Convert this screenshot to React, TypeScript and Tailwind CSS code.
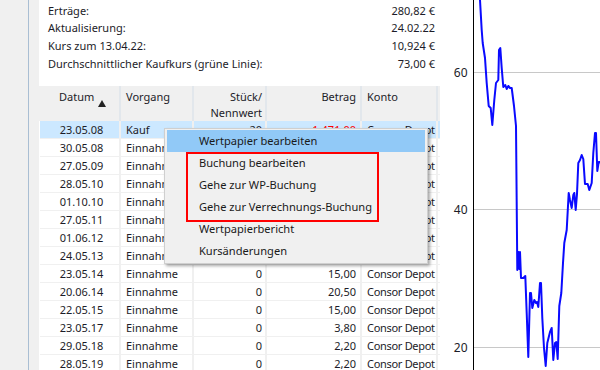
import React from "react";

type Row = { d: string; v: string; s: string; b: string; k: string; red?: boolean };

const rows: Row[] = [
  { d: "23.05.08", v: "Kauf", s: "20", b: "-1.471,00", k: "Consor Depot", red: true },
  { d: "30.05.08", v: "Einnahme", s: "0", b: "9,00", k: "Consor Depot" },
  { d: "27.05.09", v: "Einnahme", s: "0", b: "10,00", k: "Consor Depot" },
  { d: "28.05.10", v: "Einnahme", s: "0", b: "11,00", k: "Consor Depot" },
  { d: "01.10.10", v: "Einnahme", s: "0", b: "4,00", k: "Consor Depot" },
  { d: "27.05.11", v: "Einnahme", s: "0", b: "12,00", k: "Consor Depot" },
  { d: "01.06.12", v: "Einnahme", s: "0", b: "13,00", k: "Consor Depot" },
  { d: "24.05.13", v: "Einnahme", s: "0", b: "14,00", k: "Consor Depot" },
  { d: "23.05.14", v: "Einnahme", s: "0", b: "15,00", k: "Consor Depot" },
  { d: "20.06.14", v: "Einnahme", s: "0", b: "20,50", k: "Consor Depot" },
  { d: "22.05.15", v: "Einnahme", s: "0", b: "15,00", k: "Consor Depot" },
  { d: "23.05.17", v: "Einnahme", s: "0", b: "3,80", k: "Consor Depot" },
  { d: "29.05.18", v: "Einnahme", s: "0", b: "2,20", k: "Consor Depot" },
  { d: "28.05.19", v: "Einnahme", s: "0", b: "2,20", k: "Consor Depot" },
];

const info = [
  ["Erträge:", "280,82 €"],
  ["Aktualisierung:", "24.02.22"],
  ["Kurs zum 13.04.22:", "10,924 €"],
  ["Durchschnittlicher Kaufkurs (grüne Linie):", "73,00 €"],
];

const pts =
  "39.5,-10 40,0 41.7,30 42.7,43 45,58 46.7,83 48.7,106 50.7,108 52.3,125 54.3,100 56,83 58.3,80 59,50 60.3,48 61.7,68 63.3,87 65.3,85 66.7,89 68.3,86 70,88 71.7,88 74,106 76,126 77.3,270 78.3,252 79.3,269 80,252 81,278 83.3,278 85.3,276 86.7,313 88.3,357 90,293 91,293 92.3,308 94.3,300 96,303 97,302 98.3,307 100,283 101,283 102.3,318 104,348 105.7,366 107.3,343 110,332 111.7,328 113.3,360 115,343 116.3,342 117.7,359 119.3,306 121.3,293 123,263 124.3,243 126.7,230 128.7,193 130,200 131.7,208 133.3,195 134.3,193 135.7,210 137,194 138.3,163 140,160 141.7,155 143.3,159 145,184 147.7,184 149.3,190 151.7,183 153.3,153 155,133 156,133 157.3,171 158.7,162 160,162 162,165";

const menuItems = [
  "Wertpapier bearbeiten",
  "Buchung bearbeiten",
  "Gehe zur WP-Buchung",
  "Gehe zur Verrechnungs-Buchung",
  "Wertpapierbericht",
  "Kursänderungen",
];

export default function App() {
  return (
    <div className="relative flex w-[600px] h-[370px] overflow-hidden bg-[#f0f0f0] text-[11px] text-[#1c1c28] font-['Noto_Sans',sans-serif]">
      <div className="w-[28px] shrink-0" />
      <div className="w-px shrink-0 bg-[#a9bed3]" />
      <div className="w-[10px] shrink-0" />
      <div className="flex h-[370px] w-[401px] shrink-0 flex-col overflow-hidden">
        <div className="h-[86px] shrink-0 bg-white pl-[9px] pr-[5px] pt-[2px]">
          {info.map(([l, r]) => (
            <div key={l} className="flex h-[17.67px] items-center justify-between">
              <span>{l}</span>
              <span>{r}</span>
            </div>
          ))}
        </div>
        <div className="flex-1 bg-white">
          <div className="flex h-[35px] bg-[#f0f0f0] pl-px leading-[16px]">
            <div className="flex w-[81px] items-start border-r-2 border-[#e2e7ec] pl-[19px] pt-[3px]">
              <span>Datum</span>
              <svg width="8" height="7" viewBox="0 0 8 7" className="ml-[4px] mt-[11px]">
                <path d="M4 0 L8 7 L0 7 Z" fill="#222" />
              </svg>
            </div>
            <div className="w-[73px] border-r-2 border-[#e2e7ec] pl-[5px] pt-[3px]">Vorgang</div>
            <div className="w-[73px] border-r-2 border-[#e2e7ec] pr-[3px] pt-[3px] text-right">
              Stück/
              <br />
              Nennwert
            </div>
            <div className="w-[95px] border-r-2 border-[#e2e7ec] pr-[4px] pt-[3px] text-right">Betrag</div>
            <div className="w-[76px] border-r-2 border-[#e2e7ec] pl-[5px] pt-[3px]">Konto</div>
          </div>
          <div className="pl-px">
            {rows.map((r, i) => (
              <div
                key={r.d}
                className={`flex h-[18px] border-b border-[#f0f0f0] leading-[17px] ${i === 0 ? "bg-[#cce8ff]" : ""}`}
              >
                <div className="w-[81px] border-r-2 border-[#f0f0f0] pl-[4px] text-center">{r.d}</div>
                <div className="w-[73px] overflow-hidden whitespace-nowrap border-r-2 border-[#f0f0f0] pl-[5px]">{r.v}</div>
                <div className="w-[73px] border-r-2 border-[#f0f0f0] pr-[3px] text-right">{r.s}</div>
                <div className={`w-[95px] border-r-2 border-[#f0f0f0] pr-[4px] text-right ${r.red ? "text-[#ff0000]" : ""}`}>{r.b}</div>
                <div className="w-[76px] whitespace-nowrap border-r-2 border-[#f0f0f0] pl-[5px] tracking-[-0.3px]">{r.k}</div>
              </div>
            ))}
          </div>
        </div>
      </div>
      <div className="relative flex-1 bg-white">
        <svg width="160" height="370" viewBox="0 0 160 370" className="block">
          <line x1="34" y1="72.5" x2="160" y2="72.5" stroke="#c8c8c8" strokeWidth="1" />
          <line x1="34" y1="209.5" x2="160" y2="209.5" stroke="#c8c8c8" strokeWidth="1" />
          <line x1="34" y1="347.5" x2="160" y2="347.5" stroke="#c8c8c8" strokeWidth="1" />
          <line x1="33.5" y1="0" x2="33.5" y2="370" stroke="#000" strokeWidth="1" />
          <text x="27.5" y="77" textAnchor="end" fontSize="12" fill="#1c1c28" fontFamily="Noto Sans, sans-serif">60</text>
          <text x="27.5" y="214" textAnchor="end" fontSize="12" fill="#1c1c28" fontFamily="Noto Sans, sans-serif">40</text>
          <text x="27.5" y="352" textAnchor="end" fontSize="12" fill="#1c1c28" fontFamily="Noto Sans, sans-serif">20</text>
          <polyline points={pts} fill="none" stroke="#0a0aff" strokeWidth="2" strokeLinejoin="round" />
        </svg>
      </div>

      <div className="absolute left-[164px] top-[128px] w-[264px] border border-[#cfcfcf] bg-[#f0f0f0] px-[2px] py-px text-[11.1px] text-[#1a1a1a] shadow-[2px_2px_3px_rgba(0,0,0,0.35)]">
        {menuItems.map((m, i) => (
          <div key={m} className={`flex h-[22px] items-center pl-[32px] ${i === 0 ? "bg-[#91c9f7]" : ""}`}>
            {m}
          </div>
        ))}
        <div className="absolute left-[21px] top-[23px] h-[70px] w-[193px] border-2 border-[#ff0000]" />
      </div>
    </div>
  );
}
